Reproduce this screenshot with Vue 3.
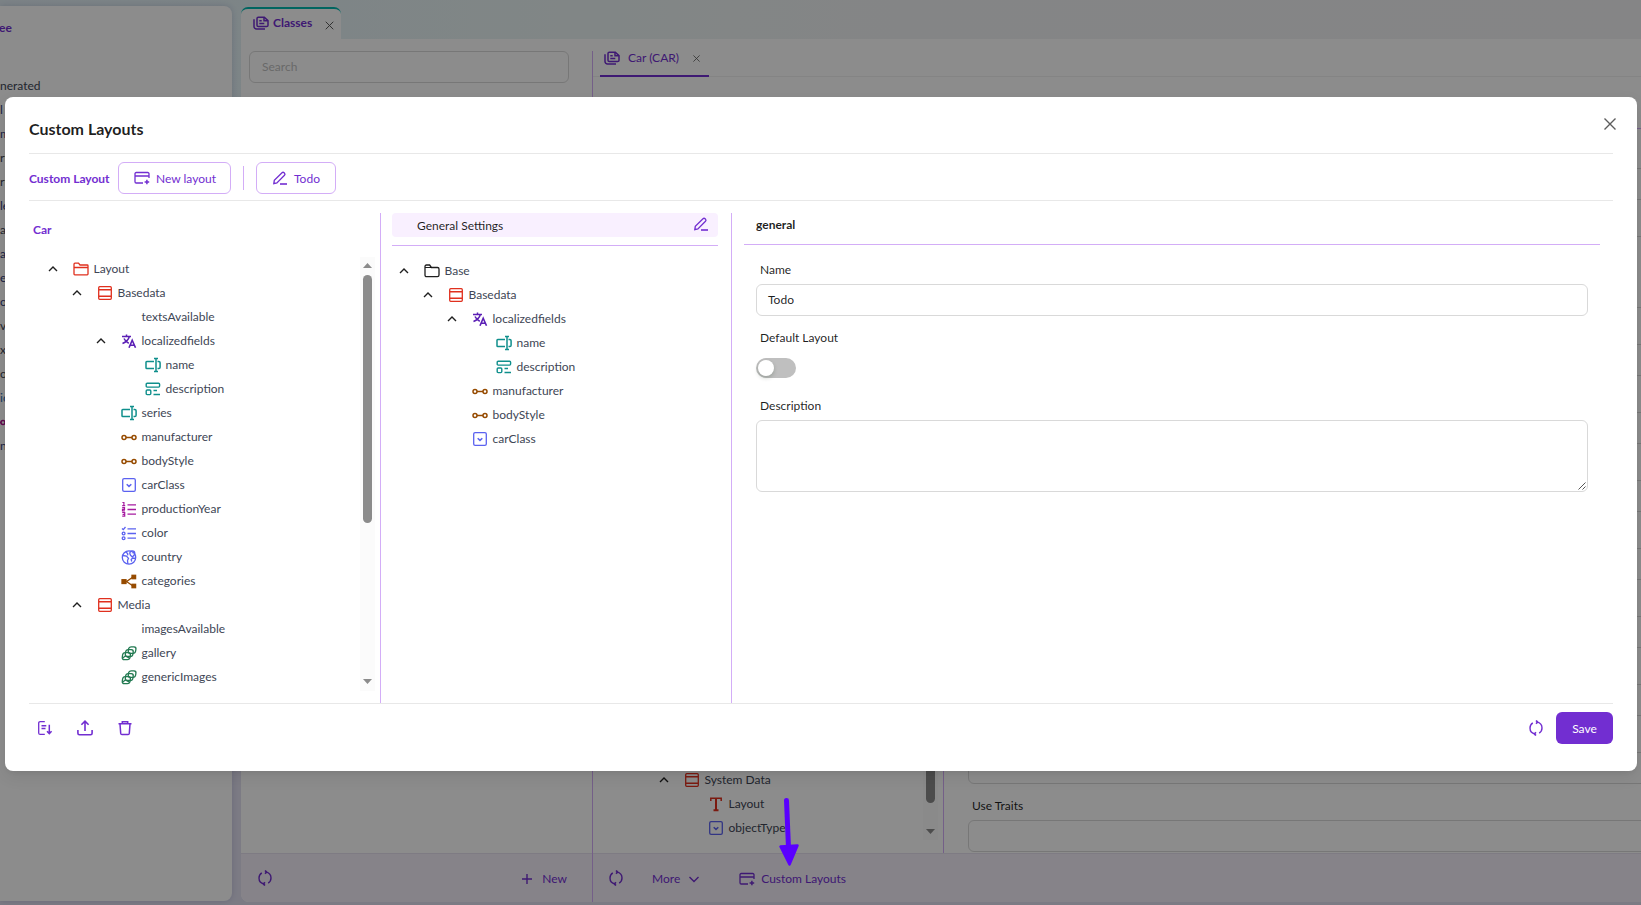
<script setup>
const icons = {
  chevronUp: '<path d="M4 10l4-4 4 4" stroke-width="1.4"/>',
  chevronDown: '<path d="M3.500 6l4.500 4.500L12.500 6" stroke-width="1.4"/>',
  close: '<path d="M2.500 2.500l11 11M13.500 2.500l-11 11" stroke-width="1.4"/>',
  plus: '<path d="M8 3v10M3 8h10" stroke-width="1.4"/>',
  classes:
    '<g stroke-width="1.500"><path d="M5.300 2.300h6L15 5.600v4.700a1.300 1.300 0 0 1-1.300 1.300H5.300A1.300 1.300 0 0 1 4 10.300V3.600a1.300 1.300 0 0 1 1.300-1.300z"/><path d="M11 2.500v3.300h3.800M6.300 5.700h2.400M6.300 8.500h5"/><path d="M1 4.200v7.300A2.500 2.500 0 0 0 3.500 14H12"/></g>',
  layout:
    '<path d="M9 13H2.200A1.200 1.200 0 0 1 1 11.800V3.700a1.200 1.200 0 0 1 1.200-1.200h11.600A1.200 1.200 0 0 1 15 3.700V8M1 6h14"/><path d="M12.900 9.700v4.600M10.600 12h4.600" stroke-width="1.500"/>',
  pen: '<path d="M1.800 13.600l.5-3.200 7.700-7.600a1.500 1.500 0 0 1 2.100 0l.4.400a1.500 1.500 0 0 1 0 2.100l-7.600 7.700z"/><path d="M8 14h7" stroke-width="1.600"/>',
  folder:
    '<path d="M1 13V3.200c0-.6.4-1 1-1h3.500L7 4h7.300c.4 0 .7.3.7.7V13c0 .5-.4.800-.8.800H1.800A.8.800 0 0 1 1 13zM1 6.500h14"/>',
  folderDark:
    '<path d="M1 12V3.500C1 2.600 1.600 2 2.400 2h3.200L7.400 4.500H13.500c.9 0 1.500.6 1.500 1.500v6c0 1-.6 1.700-1.600 1.700H2.600C1.600 13.700 1 13 1 12z"/><path d="M1.200 4.500h6.200" stroke-width="1"/>',
  panel:
    '<rect x="1.700" y="1.700" width="12.600" height="12.600" rx="1"/><path d="M2 4.800h12M2 11.300h12" stroke-width="1.400"/>',
  translate:
    '<path d="M1 3.500h9M5.500 1.500v2M8.300 3.700C7.500 6.500 5 9 1.500 10.500M3 5.500c1 2.200 2.800 3.800 4.800 4.700" stroke-width="1.500"/><path d="M8 14.700l3.200-7.500 3.300 7.500M9.200 12.200h4" stroke-width="1.600"/>',
  input:
    '<path d="M9 4.500H1.800c-.5 0-.8.300-.8.800v5.400c0 .5.300.8.800.8H9M12.500 4.500h1.300c.8 0 1.300.5 1.300 1.300v4.400c0 .8-.5 1.300-1.300 1.300h-1.300M11 2v12M9 1.600h4M9 14.400h4" stroke-width="1.500"/>',
  textarea:
    '<g stroke-width="1.400"><rect x="1.200" y="2.300" width="13.400" height="3.800" rx="1"/><rect x="1.200" y="9" width="4.600" height="4.600" rx="1"/><path d="M8.500 9.500H12M8.500 13.500H15"/></g>',
  relation:
    '<g stroke-width="1.500"><circle cx="3" cy="8.500" r="2"/><circle cx="13" cy="8.500" r="2"/><path d="M5 8.500h6"/></g>',
  select:
    '<rect x="1.700" y="1.700" width="12.600" height="12.600" rx="1.400"/><path d="M5.700 7.200L8 9.400l2.300-2.200" stroke-width="1.500"/>',
  numbered:
    '<path d="M6.500 3.800H15M6.500 8.500H15M6.500 13.200H15"/><path d="M1.400 1.500h1.500v3M1.200 4.700h3M1.200 6.700h2.300v1.600H1.500v1.600h2.400M1.200 11.500h2.500v3.700H1.200M1.600 13.300h2" stroke-width="1.200"/>',
  checklist:
    '<path d="M6.500 3.800H15M6.500 8.500H15M6.500 13.200H15"/><path d="M1 3.400l1.300 1.200L4.500 2"/><circle cx="2.600" cy="8.500" r="1.400"/><circle cx="2.600" cy="13.200" r="1.400"/>',
  globe:
    '<circle cx="8" cy="8.500" r="6.700"/><path d="M1.800 6.500l3.700.6 2 2.200-1 2.200.4 3.500M4.600 3l2 1.400.2 2M10.700 12.500l-.5-2 1.500-1.500 2.700.5"/><path d="M11.300 8c1.600-1.400 2.500-2.500 2.500-3.600a2.500 2.500 0 0 0-5 0c0 1.100.9 2.200 2.500 3.600z"/><path d="M11.300 4.300v.3"/>',
  nodes:
    '<path d="M3 8.500l2.500 0L12 4M5.500 8.500L12 13"/><rect x="1" y="6.700" width="4" height="3.800" fill="currentColor"/><rect x="11" y="2.300" width="3.600" height="3.400" fill="currentColor"/><rect x="11" y="11.300" width="3.600" height="3.400" fill="currentColor"/>',
  gallery:
    '<g stroke-width="1.300"><rect x="7.600" y="1.800" width="7.400" height="6.600" rx="2.300" transform="skewX(-8) translate(.5 0)"/><rect x="4.600" y="4.700" width="7.600" height="6.800" rx="2.300" transform="skewX(-8) translate(1 0)"/><rect x="1.500" y="7.700" width="7.800" height="6.900" rx="2.300" transform="skewX(-8) translate(1.500 0)"/><path d="M2 12.700l2.500-1.700 3.600 1.800"/></g>',
  title:
    '<path d="M8 2v12M5.500 14.300h5" stroke-width="2"/><path d="M2.800 5V2.300h10.400V5" stroke-width="1.500"/>',
  reload:
    '<path d="M9 2.100c2.900.5 5 2.900 5 5.900 0 2.200-1.100 4-2.800 5.100M7 13.900C4.100 13.400 2 11 2 8c0-2.200 1.100-4 2.800-5.100" stroke-width="1.400"/><path d="M8.100.500l1.400 1.600-1.400 1.600M7.900 12.300l-1.400 1.600 1.400 1.600" stroke-width="1.700"/>',
  importFile:
    '<path d="M7.800 1.600H3.200c-.9 0-1.500.7-1.500 1.500v9.800c0 .9.600 1.500 1.500 1.500h4.600"/><path d="M4.500 5.700h4.800M4.500 8.500h4M12.300 4.800v8.700M10 11.300l2.300 2.300 2.300-2.300" stroke-width="1.500"/>',
  upload:
    '<path d="M.9 10v3.200c0 .8.600 1.500 1.500 1.500h11.200c.9 0 1.500-.7 1.500-1.500V10M8 11V1.300M4.400 4.800L8 1.200l3.600 3.600" stroke-width="1.600"/>',
  trash:
    '<path d="M1.500 3.800h13M5.300 3.500V1.700h5.400v1.800M3 4l.7 9.400c.1.700.5 1.100 1.200 1.100h6.200c.7 0 1.100-.4 1.200-1.100L13 4" stroke-width="1.500"/>',
}

const sourceTree = [
  { label: 'Layout', level: 0, icon: 'folder', tone: 'red', open: true },
  { label: 'Basedata', level: 1, icon: 'panel', tone: 'red', open: true },
  { label: 'textsAvailable', level: 2 },
  { label: 'localizedfields', level: 2, icon: 'translate', tone: 'violet', open: true },
  { label: 'name', level: 3, icon: 'input', tone: 'teal' },
  { label: 'description', level: 3, icon: 'textarea', tone: 'teal' },
  { label: 'series', level: 2, icon: 'input', tone: 'teal' },
  { label: 'manufacturer', level: 2, icon: 'relation', tone: 'brown' },
  { label: 'bodyStyle', level: 2, icon: 'relation', tone: 'brown' },
  { label: 'carClass', level: 2, icon: 'select', tone: 'blue' },
  { label: 'productionYear', level: 2, icon: 'numbered', tone: 'magenta' },
  { label: 'color', level: 2, icon: 'checklist', tone: 'blue' },
  { label: 'country', level: 2, icon: 'globe', tone: 'blue' },
  { label: 'categories', level: 2, icon: 'nodes', tone: 'brown' },
  { label: 'Media', level: 1, icon: 'panel', tone: 'red', open: true },
  { label: 'imagesAvailable', level: 2 },
  { label: 'gallery', level: 2, icon: 'gallery', tone: 'green' },
  { label: 'genericImages', level: 2, icon: 'gallery', tone: 'green' },
]

const layoutTree = [
  { label: 'Base', level: 0, icon: 'folderDark', tone: 'dark', open: true },
  { label: 'Basedata', level: 1, icon: 'panel', tone: 'red', open: true },
  { label: 'localizedfields', level: 2, icon: 'translate', tone: 'violet', open: true },
  { label: 'name', level: 3, icon: 'input', tone: 'teal' },
  { label: 'description', level: 3, icon: 'textarea', tone: 'teal' },
  { label: 'manufacturer', level: 2, icon: 'relation', tone: 'brown' },
  { label: 'bodyStyle', level: 2, icon: 'relation', tone: 'brown' },
  { label: 'carClass', level: 2, icon: 'select', tone: 'blue' },
]

const classTree = [
  { label: 'System Data', level: 0, icon: 'panel', tone: 'red', open: true },
  { label: 'Layout', level: 1, icon: 'title', tone: 'red' },
  { label: 'objectType', level: 1, icon: 'select', tone: 'blue' },
]

const objectRows = [
  { text: 'nerated' },
  { text: 'l', tone: 'navy' },
  { text: 'm', tone: 'navy' },
  { text: 'rt' },
  { text: 'rt' },
  { text: 'le', tone: 'navy' },
  { text: 'ac' },
  { text: 'a', tone: 'navy' },
  { text: 'e', tone: 'navy' },
  { text: 'o', tone: 'navy' },
  { text: 've' },
  { text: 'xa' },
  { text: 'og' },
  { text: 'ic', tone: 'sky' },
  { text: '', relation: true },
  { text: 'nc', tone: 'navy' },
]

const classFields = ['input', 'area', 'input', 'input', 'input', 'input', 'input', 'input', 'input', 'input']
</script>

<template>
  <div class="screen">
    <div class="shell">
      <aside class="side">
        <div class="side-title">ee</div>
        <div
          v-for="(row, i) in objectRows"
          :key="i"
          class="side-row"
          :class="row.tone"
        >
          <svg v-if="row.relation" class="ic" viewBox="0 0 16 16" v-html="icons.relation" />
          <span v-else>{{ row.text }}</span>
        </div>
      </aside>

      <main class="main">
        <div class="tab">
          <svg class="ic" viewBox="0 0 16 16" v-html="icons.classes" />
          <b>Classes</b>
          <svg class="tab-close" viewBox="0 0 16 16" v-html="icons.close" />
        </div>
        <div class="content">
          <section class="list-pane">
            <div class="search">Search</div>
            <div class="bar list-bar">
              <svg class="ic" viewBox="0 0 16 16" v-html="icons.reload" />
              <span class="new"><svg class="ic" viewBox="0 0 16 16" v-html="icons.plus" />New</span>
            </div>
          </section>
          <section class="class-pane">
            <div class="class-tabs">
              <div class="class-tab">
                <svg class="ic" viewBox="0 0 16 16" v-html="icons.classes" />
                <span>Car (CAR)</span>
                <svg class="class-close" viewBox="0 0 16 16" v-html="icons.close" />
              </div>
            </div>
            <div class="class-body">
              <div class="class-tree">
                <div class="tree">
                  <div
                    v-for="n in classTree"
                    :key="n.label"
                    class="node"
                    :style="{ paddingLeft: n.level * 24 + 'px' }"
                  >
                    <svg class="ic arrow" viewBox="0 0 16 16" v-html="n.open ? icons.chevronUp : ''" />
                    <svg class="ic" :class="n.tone" viewBox="0 0 16 16" v-html="icons[n.icon]" />
                    <span>{{ n.label }}</span>
                  </div>
                </div>
                <div class="scroll class-scroll"><i class="thumb" /><i class="down" /></div>
              </div>
              <div class="class-form">
                <div v-for="(kind, i) in classFields" :key="i">
                  <label class="label">{{ i === classFields.length - 1 ? 'Use Traits' : '' }}</label>
                  <div class="control" :class="kind" />
                </div>
              </div>
            </div>
            <div class="bar class-bar">
              <svg class="ic" viewBox="0 0 16 16" v-html="icons.reload" />
              <span class="more">More<svg class="ic" viewBox="0 0 16 16" v-html="icons.chevronDown" /></span>
              <span class="custom"><svg class="ic" viewBox="0 0 16 16" v-html="icons.layout" />Custom Layouts</span>
            </div>
          </section>
        </div>
      </main>
    </div>

    <div class="mask" />

    <svg class="pointer" viewBox="0 0 24 72">
      <path d="M9.500 4.500L11.500 52" stroke="#5a00ff" stroke-width="5" stroke-linecap="round" />
      <path d="M3.500 50.500L20.500 49.500L12.500 68.500z" fill="#5a00ff" stroke="#5a00ff" stroke-width="2.500" stroke-linejoin="round" />
    </svg>

    <div class="modal">
      <header class="head">
        <h1>Custom Layouts</h1>
        <svg class="modal-close" viewBox="0 0 16 16" v-html="icons.close" />
      </header>
      <div class="toolbar">
        <b>Custom Layout</b>
        <button class="btn create"><svg class="ic" viewBox="0 0 16 16" v-html="icons.layout" />New layout</button>
        <i class="sep" />
        <button class="btn edit"><svg class="ic" viewBox="0 0 16 16" v-html="icons.pen" />Todo</button>
      </div>
      <div class="columns">
        <section class="source">
          <h2>Car</h2>
          <div class="source-body">
            <div class="tree">
              <div
                v-for="n in sourceTree"
                :key="n.level + n.label"
                class="node"
                :style="{ paddingLeft: 16 + n.level * 24 + 'px' }"
              >
                <svg class="ic arrow" viewBox="0 0 16 16" v-html="n.open ? icons.chevronUp : ''" />
                <svg class="ic" :class="n.tone" viewBox="0 0 16 16" v-html="n.icon ? icons[n.icon] : ''" />
                <span>{{ n.label }}</span>
              </div>
            </div>
            <div class="scroll"><i class="up" /><i class="thumb" /><i class="down" /></div>
          </div>
        </section>
        <section class="target">
          <div class="settings">
            <span>General Settings</span>
            <svg class="ic" viewBox="0 0 16 16" v-html="icons.pen" />
          </div>
          <div class="tree">
            <div
              v-for="n in layoutTree"
              :key="n.label"
              class="node"
              :style="{ paddingLeft: 4 + n.level * 24 + 'px' }"
            >
              <svg class="ic arrow" viewBox="0 0 16 16" v-html="n.open ? icons.chevronUp : ''" />
              <svg class="ic" :class="n.tone" viewBox="0 0 16 16" v-html="icons[n.icon]" />
              <span>{{ n.label }}</span>
            </div>
          </div>
        </section>
        <section class="detail">
          <h3>general</h3>
          <div class="form">
            <label class="label">Name</label>
            <div class="control input">Todo</div>
            <label class="label">Default Layout</label>
            <div class="switch-line"><span class="switch" /></div>
            <label class="label">Description</label>
            <div class="control area">
              <svg class="grip" viewBox="0 0 8 8"><path d="M.5 7.500l7-7M4.500 7.500l3-3" /></svg>
            </div>
          </div>
        </section>
      </div>
      <footer class="foot">
        <div class="foot-left">
          <svg class="ic" viewBox="0 0 16 16" v-html="icons.importFile" />
          <svg class="ic" viewBox="0 0 16 16" v-html="icons.upload" />
          <svg class="ic" viewBox="0 0 16 16" v-html="icons.trash" />
        </div>
        <div class="foot-right">
          <svg class="ic" viewBox="0 0 16 16" v-html="icons.reload" />
          <button class="save">Save</button>
        </div>
      </footer>
    </div>
  </div>
</template>

<style>
body {
  margin: 0;
  overflow: hidden;
}
</style>

<style scoped>
* {
  box-sizing: border-box;
}
.screen {
  position: relative;
  width: 1641px;
  height: 905px;
  overflow: hidden;
  font: 12px/22px Lato, sans-serif;
  color: rgba(0, 0, 0, 0.88);
}
.ic {
  width: 16px;
  height: 16px;
  flex: none;
}
svg {
  display: block;
  fill: none;
  stroke: currentColor;
  stroke-width: 1.3;
}
h1, h2, h3 {
  margin: 0;
}
.red { color: #e0301e; }
.violet { color: #5b1fb5; }
.teal { color: #0f8f8c; }
.brown { color: #964b00; }
.blue { color: #5b62f0; }
.magenta { color: #a61ba0; }
.green { color: #237a52; }
.dark { color: rgba(0, 0, 0, 0.88); }

/* Application behind the dialog */
.shell {
  display: flex;
  height: 905px;
  gap: 9px;
  padding-top: 6px;
  background:
    linear-gradient(180deg, rgba(226, 225, 241, 0) 8%, #e2e1f1 85%),
    linear-gradient(90deg, #e2eef4 0, #e4f2f6 260px, #ebf5f5 560px, #f1f3f5 900px, #f2f3f5);
}
.side {
  width: 232px;
  height: 895px;
  flex: none;
  padding-top: 11px;
  background: #fff;
  border-radius: 0 8px 8px 0;
  box-shadow: 0 0 6px rgba(60, 60, 130, 0.2);
}
.side-title {
  height: 46px;
  margin: 0 0 11px -1px;
  color: #722ed1;
  font-weight: 700;
}
.side-row {
  height: 24px;
  line-height: 24px;
  white-space: nowrap;
  color: #404655;
}
.side-row .ic {
  position: relative;
  top: 4px;
  left: -10px;
  color: #b0138f;
  stroke-width: 2.6;
}
.side-row.navy { color: #33407a; }
.side-row.sky { color: #2b6cb0; }
.main {
  display: flex;
  flex-direction: column;
  width: 1400px;
  flex: none;
  height: 896px;
  padding-top: 1px;
}
.tab {
  display: flex;
  align-items: center;
  width: 100px;
  height: 32px;
  padding: 0 0 2px 12px;
  border-top: 2px solid #00b8b0;
  border-radius: 7px 7px 0 0;
  background: #fff;
  color: #722ed1;
}
.tab b {
  width: 42px;
  margin-left: 4px;
}
.tab-close {
  width: 11px;
  height: 11px;
  margin: 4px 0 0 9px;
  color: #555;
  stroke-width: 1.6;
}
.content {
  display: flex;
  height: 863px;
  background: #fff;
  border-radius: 0 0 0 8px;
  overflow: hidden;
}
.list-pane {
  display: flex;
  flex-direction: column;
  justify-content: space-between;
  width: 351px;
  padding-top: 12px;
}
.search {
  width: 320px;
  height: 32px;
  margin-left: 8px;
  padding: 4px 12px;
  border: 1px solid #d9d9d9;
  border-radius: 6px;
  color: #bfbfbf;
}
.bar {
  display: flex;
  align-items: center;
  height: 49px;
  border-top: 1px solid #e6e0ee;
  background: #f5effa;
  color: #722ed1;
}
.list-bar {
  justify-content: space-between;
  padding: 0 25px 0 16px;
}
.new, .more, .custom {
  display: flex;
  align-items: center;
  padding-top: 1px;
}
.new { gap: 7px; }
.class-pane {
  display: flex;
  flex-direction: column;
  width: 1049px;
  margin-top: 12px;
  border-left: 1px solid #d3adf7;
}
.class-tabs {
  height: 26px;
  border-bottom: 1px solid #f0f0f0;
  padding-left: 7px;
}
.class-tab {
  display: flex;
  align-items: center;
  width: 109px;
  height: 26px;
  padding: 0 7px 10px 4px;
  border-bottom: 2px solid #722ed1;
  color: #722ed1;
}
.class-tab span {
  margin: 0 13px 0 8px;
  white-space: nowrap;
}
.class-close {
  width: 9px;
  height: 9px;
  color: #555;
  stroke-width: 1.8;
}
.class-body {
  display: flex;
  height: 776px;
}
.class-tree {
  display: flex;
  width: 350px;
  padding: 51px 5px 13px 63px;
}
.class-tree .tree {
  width: 267px;
  display: flex;
  flex-direction: column;
  justify-content: flex-end;
}
.class-form {
  flex: 1;
  margin-top: 51px;
  padding: 3px 0 0 24px;
  border-top: 1px solid #d3adf7;
  border-left: 1px solid #d3adf7;
  overflow: hidden;
}
.class-form .control {
  width: 760px;
}
.class-bar {
  padding-left: 15px;
}
.more {
  margin-left: 28px;
  gap: 6px;
}
.custom {
  margin-left: 37px;
  gap: 6px;
}
.mask {
  position: absolute;
  inset: 0;
  background: rgba(0, 0, 0, 0.45);
}
.pointer {
  position: absolute;
  left: 777px;
  top: 796px;
  width: 24px;
  height: 72px;
}

/* Shared tree and form parts */
.node {
  display: flex;
  align-items: center;
  height: 24px;
  color: #404655;
}
.node .arrow {
  margin-right: 12px;
  color: #1f1f1f;
}
.node span {
  margin-left: 4.5px;
}
.scroll {
  display: flex;
  flex-direction: column;
  align-items: center;
  width: 15px;
  background: #fbfbfb;
}
.scroll i {
  display: block;
  flex: none;
  width: 9px;
  background: #8b8b8b;
}
.thumb {
  height: 248px;
  border-radius: 5px;
}
.up {
  height: 5px;
  margin: 6px 0 7px;
  clip-path: polygon(0 100%, 50% 0, 100% 100%);
}
.down {
  height: 5px;
  margin: auto 0 7px;
  clip-path: polygon(0 0, 100% 0, 50% 100%);
}
.class-scroll .thumb {
  height: 675px;
}
.class-scroll .down {
  margin-bottom: 6px;
}
.label {
  display: block;
  height: 36px;
  padding: 12px 4px 4px;
  line-height: 20px;
}
.control {
  border: 1px solid #d9d9d9;
  border-radius: 6px;
  background: #fff;
}
.input {
  height: 32px;
  padding: 4px 11px;
}
.area {
  position: relative;
  height: 72px;
}
.grip {
  position: absolute;
  right: 1px;
  bottom: 1px;
  width: 8px;
  height: 8px;
  stroke: #555;
  stroke-width: 1;
}

/* Dialog */
.modal {
  position: absolute;
  left: 5px;
  top: 97px;
  width: 1632px;
  height: 674px;
  padding: 0 24px;
  background: #fff;
  border-radius: 8px;
  box-shadow: 0 6px 16px rgba(0, 0, 0, 0.08), 0 3px 6px -4px rgba(0, 0, 0, 0.12);
}
.head {
  display: flex;
  justify-content: space-between;
  height: 57px;
  padding-top: 20px;
  border-bottom: 1px solid #e8e8e8;
}
.head h1 {
  font-size: 16px;
  line-height: 24px;
  font-weight: 700;
}
.modal-close {
  width: 16px;
  height: 16px;
  margin: -1px -5px 0 0;
  color: #5c5c5c;
}
.toolbar {
  display: flex;
  align-items: center;
  height: 47px;
  padding-top: 2px;
  border-bottom: 1px solid #e8e8e8;
  color: #722ed1;
}
.toolbar b {
  width: 89px;
  padding-top: 1px;
}
.btn {
  display: flex;
  align-items: center;
  height: 32px;
  padding: 1px 0 0 15px;
  border: 1px solid #d3adf7;
  border-radius: 6px;
  background: #fff;
  color: #722ed1;
  font: inherit;
  white-space: nowrap;
}
.btn .ic {
  margin: -1px 6px 0 0;
}
.create { width: 113px; }
.edit { width: 80px; }
.sep {
  width: 1px;
  height: 24px;
  margin: 0 12px;
  background: #d3adf7;
}
.columns {
  display: flex;
  height: 502px;
  padding-top: 12px;
}
.source {
  width: 352px;
  border-right: 1px solid #d3adf7;
}
.source h2 {
  height: 44px;
  padding: 6px 4px 0;
  color: #722ed1;
  font-size: 12px;
  line-height: 22px;
}
.source-body {
  display: flex;
  height: 434px;
}
.source-body .tree {
  width: 331px;
}
.target {
  width: 351px;
  padding: 0 13px 0 11px;
  border-right: 1px solid #d3adf7;
}
.settings {
  display: flex;
  justify-content: space-between;
  height: 24px;
  padding: 2px 9px 0 25px;
  border-radius: 4px;
  background: #f9f0ff;
}
.settings .ic {
  margin-top: 1px;
  color: #722ed1;
}
.target .tree {
  margin-top: 8px;
  padding-top: 13px;
  border-top: 1px solid #d3adf7;
}
.detail {
  width: 856px;
  margin-left: 12px;
}
.detail h3 {
  height: 32px;
  padding: 1px 0 0 12px;
  border-bottom: 1px solid #d3adf7;
  font-size: 12px;
  line-height: 22px;
}
.form {
  padding: 3px 12px 0;
}
.switch-line {
  display: flex;
  align-items: center;
  height: 32px;
}
.switch {
  width: 40px;
  height: 20px;
  padding: 2px;
  border-radius: 10px;
  background: #bfbfbf;
}
.switch::before {
  content: "";
  display: block;
  width: 16px;
  height: 16px;
  border-radius: 50%;
  background: #fff;
  box-shadow: 0 2px 4px rgba(0, 35, 11, 0.2);
}
.foot {
  display: flex;
  justify-content: space-between;
  padding-top: 8px;
  border-top: 1px solid #e8e8e8;
  color: #722ed1;
}
.foot-left {
  display: flex;
  align-items: center;
  gap: 24px;
  height: 32px;
  padding-left: 8px;
}
.foot-right {
  display: flex;
  align-items: center;
  gap: 12px;
}
.save {
  width: 57px;
  height: 32px;
  padding: 1px 0 0;
  border: 0;
  border-radius: 6px;
  background: #722ed1;
  color: #fff;
  font: inherit;
}
</style>
